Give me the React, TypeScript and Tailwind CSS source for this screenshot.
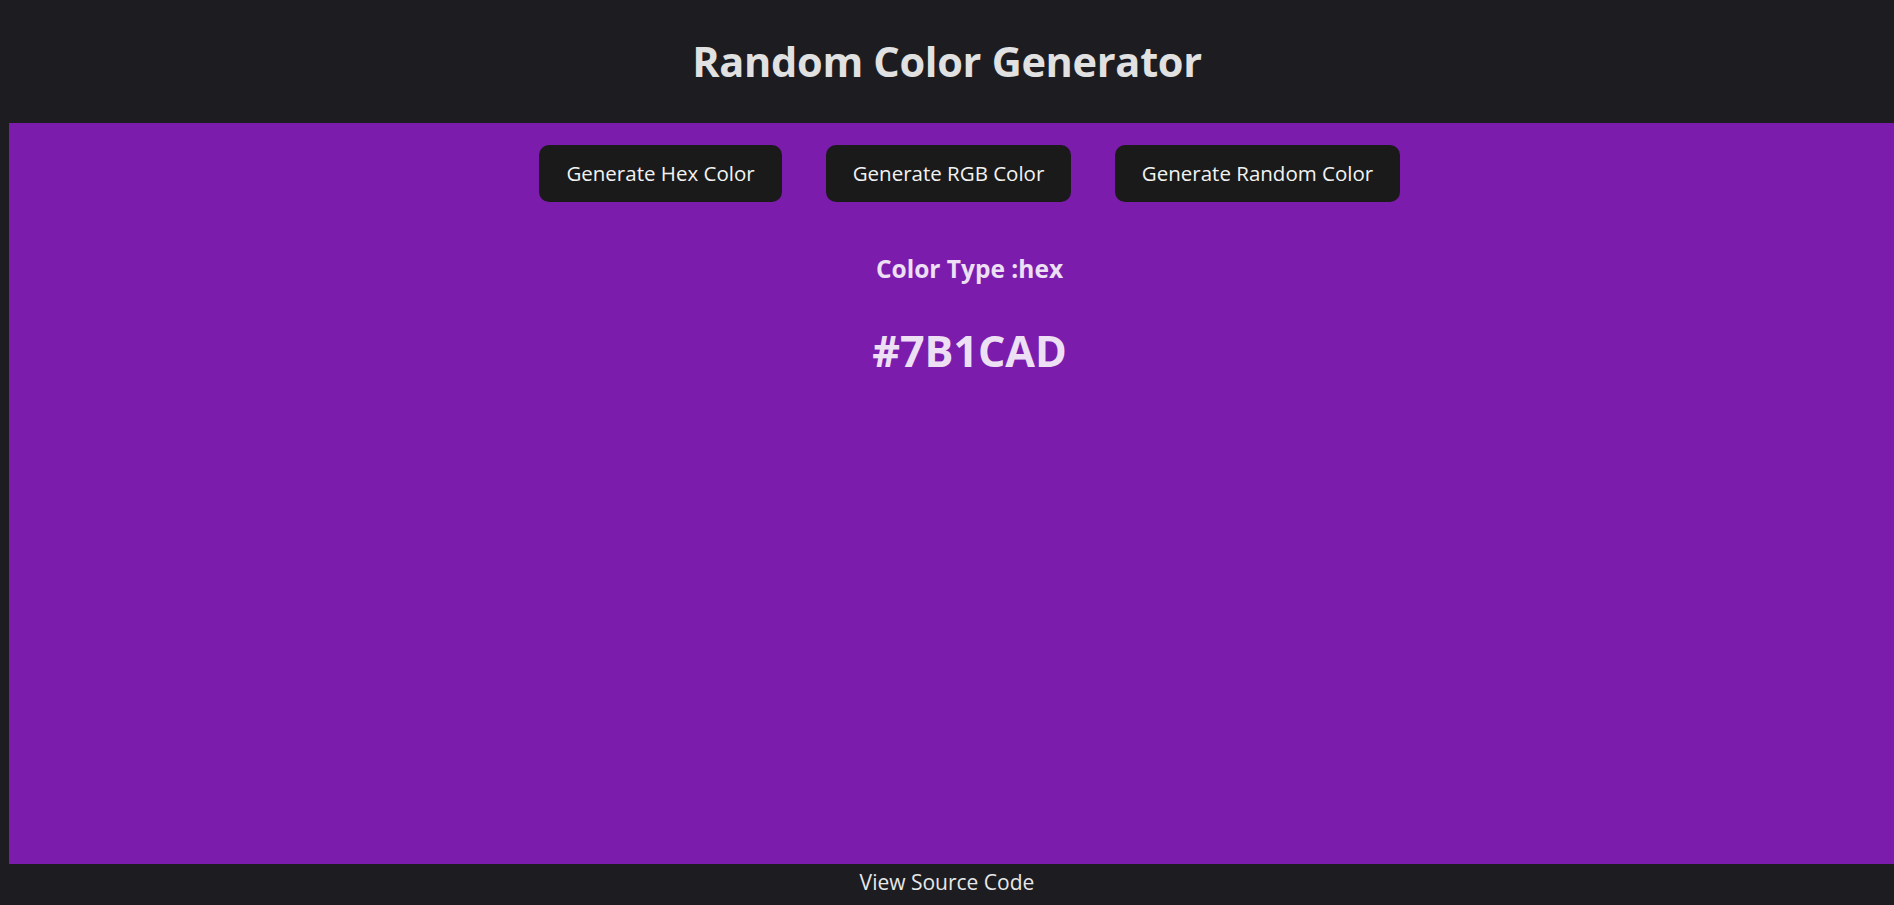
export default function App() {
    const font = { fontFamily: '"Open Sans", "Noto Sans", sans-serif' };
    return (
        <div className="h-screen flex flex-col bg-[#1c1c21] text-[#e1e1e1] overflow-hidden" style={font}>
            {/* Header */}
            <header className="h-[123px] shrink-0 flex items-center justify-center">
                <h1 className="text-[41.5px] font-bold leading-none tracking-[-0.3px]">Random Color Generator</h1>
            </header>

            {/* Color panel */}
            <main className="flex-1 ml-[9px] bg-[#7B1CAD] flex flex-col items-center pl-[36px] pt-[22px]">
                <div className="flex gap-[44px]">
                    <button className="h-[57px] w-[243px] rounded-[10px] bg-[#1a1a1a] text-[20.5px] text-[#f2f2f2]">
                        Generate Hex Color
                    </button>
                    <button className="h-[57px] w-[245px] rounded-[10px] bg-[#1a1a1a] text-[20.5px] text-[#f2f2f2]">
                        Generate RGB Color
                    </button>
                    <button className="h-[57px] w-[285px] rounded-[10px] bg-[#1a1a1a] text-[20.5px] text-[#f2f2f2]">
                        Generate Random Color
                    </button>
                </div>
                <h3 className="mt-[49px] text-[24.5px] font-bold text-[#ede0f5]">Color Type :hex</h3>
                <h2 className="mt-[41px] text-[43px] font-bold leading-none text-[#ede0f5]">#7B1CAD</h2>
            </main>

            {/* Footer */}
            <footer className="h-[41px] shrink-0 flex items-center justify-center pb-1">
                <a className="text-[21px] text-[#e8e8e8]">View Source Code</a>
            </footer>
        </div>
    );
}
